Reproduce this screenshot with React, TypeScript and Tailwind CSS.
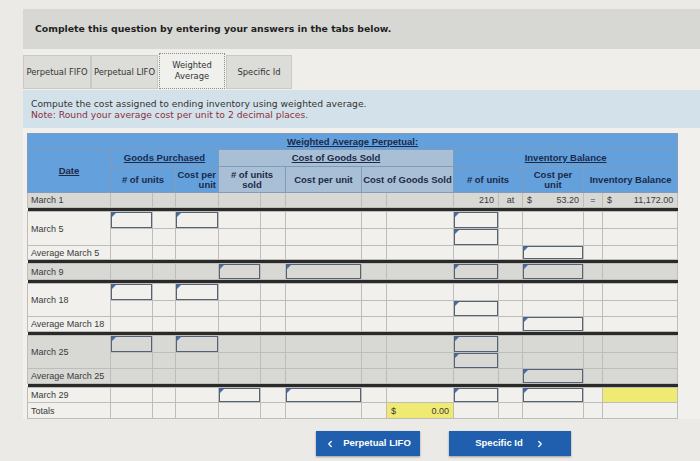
import type { ReactNode } from 'react';
import { ChevronLeft, ChevronRight } from 'lucide-react';

type Cell = 'in' | 'yel' | ReactNode;

// inner box height per row height (collapsed borders eat 1px)
const BOX: Record<number, string> = {
  14: 'h-[13px]',
  15: 'h-[14px]',
  16: 'h-[15px]',
  17: 'h-[16px]',
};
const ROW: Record<number, string> = {
  14: 'h-[14px]',
  15: 'h-[15px]',
  16: 'h-[16px]',
  17: 'h-[17px]',
};

const line = 'border border-[#bdbdb9]';

function InputBox({ h }: { h: number }) {
  return (
    <div className={`relative ${BOX[h]} border border-[#566174]`}>
      <span className="absolute left-0 top-0 h-0 w-0 border-t-[4px] border-r-[4px] border-t-[#3d6fb5] border-r-transparent" />
    </div>
  );
}

function DataRow({
  h,
  gray,
  label,
  span,
  cells = {},
}: {
  h: number;
  gray?: boolean;
  label?: string;
  span?: number;
  cells?: Record<number, Cell>;
}) {
  return (
    <tr className={`${ROW[h]} ${gray ? 'bg-[#d8d8d5]' : 'bg-[#f1f0ec]'}`}>
      {label !== undefined && (
        <td rowSpan={span} className={`${line} px-[3px] align-middle text-[#3a3a3a]`}>
          {label}
        </td>
      )}
      {Array.from({ length: 13 }, (_, i) => {
        const c = cells[i + 1];
        if (c === 'in')
          return (
            <td key={i} className={`${line} p-0`}>
              <InputBox h={h} />
            </td>
          );
        if (c === 'yel') return <td key={i} className={`${line} bg-[#efeb72]`} />;
        return (
          <td key={i} className={`${line} p-0 text-[#3a3a3a]`}>
            {c}
          </td>
        );
      })}
    </tr>
  );
}

function Sep() {
  return (
    <tr className="h-[4px]">
      <td colSpan={14} className="bg-[#2a2a2a] p-0" />
    </tr>
  );
}

export default function App() {
  const hd = 'border border-[#7f9cbd] text-[#1c2a48] font-bold';
  const blue = 'bg-[#63a0dc]';
  const grayBlue = 'bg-[#a9bfd6]';
  const tab = 'mt-[2px] flex h-[34px] items-center justify-center border border-[#c9c9c5] bg-[#dcdcd8]';

  return (
    <div className="h-[461px] w-[700px] overflow-hidden bg-[#ebeae6] pt-[9px] font-['DejaVu_Sans',sans-serif]">
      <div className="ml-[23px] flex h-[40px] items-center bg-[#d7d7d4] pl-[12px] text-[9.3px] font-bold text-[#1f1f1f]">
        Complete this question by entering your answers in the tabs below.
      </div>

      <div className="ml-[23px] flex h-[41px] items-end bg-[#efeeea] pb-[1px] text-[8.4px] text-[#333]">
        <div className={`${tab} w-[68px]`}>Perpetual FIFO</div>
        <div className={`${tab} w-[67px]`}>Perpetual LIFO</div>
        <div className="mx-[1px] flex h-[36px] w-[66px] items-center justify-center border border-dotted border-[#8d8d8d] bg-[#f0f0ed] text-center leading-[11px]">
          Weighted
          <br />
          Average
        </div>
        <div className={`${tab} w-[66px]`}>Specific Id</div>
      </div>

      <div className="ml-[23px] h-[38px] bg-[#d3e2ea] pl-[8px] pt-[8px] text-[9.2px] leading-[11px]">
        <p className="text-[#333]">Compute the cost assigned to ending inventory using weighted average.</p>
        <p className="text-[#8c3040]">Note: Round your average cost per unit to 2 decimal places.</p>
      </div>

      <div className="ml-[23px] bg-[#f1f0ed] pl-[4px] pt-[5px]">
        <table className="w-[650px] table-fixed border-collapse font-['Liberation_Sans',Arial,sans-serif] text-[9px] leading-[10px]">
          <colgroup>
            <col className="w-[83px]" />
            <col className="w-[42px]" />
            <col className="w-[23px]" />
            <col className="w-[43px]" />
            <col className="w-[42px]" />
            <col className="w-[25px]" />
            <col className="w-[76px]" />
            <col className="w-[25px]" />
            <col className="w-[67px]" />
            <col className="w-[45px]" />
            <col className="w-[24px]" />
            <col className="w-[61px]" />
            <col className="w-[19px]" />
            <col className="w-[75px]" />
          </colgroup>
          <thead className="text-[9.5px]">
            <tr className="h-[16px]">
              <td colSpan={14} className={`${hd} ${blue} text-center`}>
                <span className="underline">Weighted Average Perpetual:</span>
              </td>
            </tr>
            <tr className="h-[17px]">
              <td rowSpan={2} className={`${hd} ${blue} text-center`}>
                <span className="underline">Date</span>
              </td>
              <td colSpan={3} className={`${hd} ${blue} text-center`}>
                <span className="underline">Goods Purchased</span>
              </td>
              <td colSpan={5} className={`${hd} ${grayBlue} text-center`}>
                <span className="underline">Cost of Goods Sold</span>
              </td>
              <td colSpan={5} className={`${hd} ${blue} text-center`}>
                <span className="underline">Inventory Balance</span>
              </td>
            </tr>
            <tr className="h-[26px]">
              <td colSpan={2} className={`${hd} ${blue} text-center`}>
                # of units
              </td>
              <td className={`${hd} ${blue} pr-[2px] text-right`}>
                Cost per
                <br />
                unit
              </td>
              <td colSpan={2} className={`${hd} ${grayBlue} text-center`}>
                # of units
                <br />
                sold
              </td>
              <td className={`${hd} ${grayBlue} text-center`}>Cost per unit</td>
              <td colSpan={2} className={`${hd} ${grayBlue} text-center`}>
                Cost of Goods Sold
              </td>
              <td colSpan={2} className={`${hd} ${blue} text-center`}>
                # of units
              </td>
              <td className={`${hd} ${blue} text-center`}>
                Cost per
                <br />
                unit
              </td>
              <td colSpan={2} className={`${hd} ${blue} text-center`}>
                Inventory Balance
              </td>
            </tr>
          </thead>
          <tbody>
            <DataRow
              h={15}
              gray
              label="March 1"
              cells={{
                9: <div className="pr-[4px] text-right">210</div>,
                10: <div className="text-center">at</div>,
                11: (
                  <div className="flex justify-between px-[4px]">
                    <span>$</span>
                    <span>53.20</span>
                  </div>
                ),
                12: <div className="text-center">=</div>,
                13: (
                  <div className="flex justify-between px-[4px]">
                    <span>$</span>
                    <span>11,172.00</span>
                  </div>
                ),
              }}
            />
            <Sep />
            <DataRow h={17} label="March 5" span={2} cells={{ 1: 'in', 3: 'in', 9: 'in' }} />
            <DataRow h={17} cells={{ 9: 'in' }} />
            <DataRow h={14} label="Average March 5" cells={{ 11: 'in' }} />
            <Sep />
            <DataRow h={16} gray label="March 9" cells={{ 4: 'in', 6: 'in', 9: 'in', 11: 'in' }} />
            <Sep />
            <DataRow h={17} label="March 18" span={2} cells={{ 1: 'in', 3: 'in' }} />
            <DataRow h={16} cells={{ 9: 'in' }} />
            <DataRow h={15} label="Average March 18" cells={{ 11: 'in' }} />
            <Sep />
            <DataRow h={17} gray label="March 25" span={2} cells={{ 1: 'in', 3: 'in', 9: 'in' }} />
            <DataRow h={16} gray cells={{ 9: 'in' }} />
            <DataRow h={15} gray label="Average March 25" cells={{ 11: 'in' }} />
            <Sep />
            <DataRow h={15} label="March 29" cells={{ 4: 'in', 6: 'in', 9: 'in', 11: 'in', 13: 'yel' }} />
            <tr className="h-[16px] bg-[#f1f0ec]">
              <td className={`${line} px-[3px] text-[#3a3a3a]`}>Totals</td>
              {Array.from({ length: 7 }, (_, i) => (
                <td key={i} className={line} />
              ))}
              <td className={`${line} bg-[#efeb72] text-[#3a3a3a]`}>
                <div className="flex justify-between px-[4px]">
                  <span>$</span>
                  <span>0.00</span>
                </div>
              </td>
              {Array.from({ length: 5 }, (_, i) => (
                <td key={i} className={line} />
              ))}
            </tr>
          </tbody>
        </table>
      </div>

      <div className="mt-[12px] flex gap-[29px] pl-[316px] font-['Liberation_Sans',Arial,sans-serif] text-[9.5px] font-bold text-white">
        <button className="flex h-[25px] w-[104px] items-center justify-center gap-[8px] bg-[#1f5fae] shadow-[0_1px_2px_rgba(0,0,0,0.35)]">
          <ChevronLeft size={10} strokeWidth={3} />
          Perpetual LIFO
        </button>
        <button className="flex h-[25px] w-[122px] items-center justify-center gap-[12px] bg-[#1f5fae] shadow-[0_1px_2px_rgba(0,0,0,0.35)]">
          Specific Id
          <ChevronRight size={10} strokeWidth={3} />
        </button>
      </div>
    </div>
  );
}
